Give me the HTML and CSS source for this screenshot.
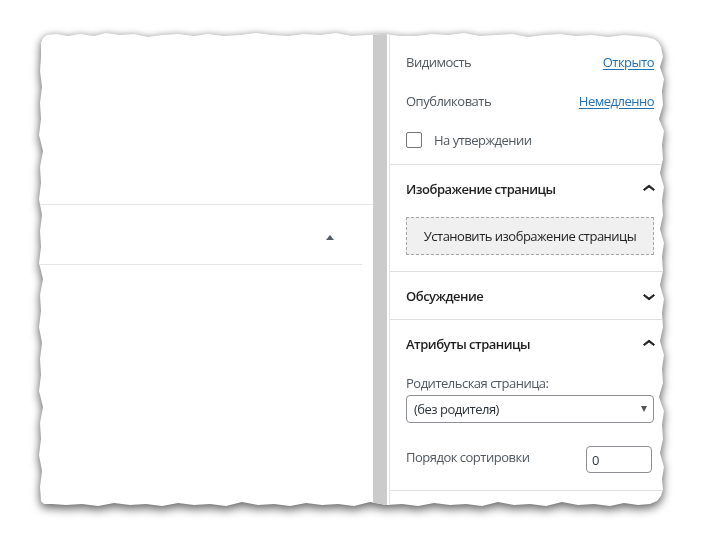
FILE: index.html
```html
<!DOCTYPE html>
<html lang="ru">
<head>
<meta charset="utf-8">
<title>Редактор страницы</title>
<link rel="stylesheet" href="styles.css">
</head>
<body>
<div class="stage">
  <div class="sheet">
    <div class="paper">
      <div class="editor">
        <div class="meta-box">
          <div class="meta-body">
            <span class="toggle-arrow"></span>
          </div>
        </div>
      </div>
      <div class="scrollbar"></div>
      <div class="gap"></div>
      <aside class="sidebar">
        <section class="panel status">
          <div class="row"><span class="label">Видимость</span><a class="link" href="#">Открыто</a></div>
          <div class="row"><span class="label">Опубликовать</span><a class="link" href="#">Немедленно</a></div>
          <div class="row check-row"><span class="checkbox"></span><span class="label">На утверждении</span></div>
        </section>
        <section class="panel">
          <div class="panel-header">
            <h2>Изображение страницы</h2>
            <svg class="chevron" viewBox="0 0 24 24" width="24" height="24"><path d="M6.5 12.4L12 8l5.5 4.4-.9 1.2L12 10l-4.6 3.6-1-1.2z"/></svg>
          </div>
          <div class="panel-body image-body">
            <div class="featured">Установить изображение страницы</div>
          </div>
        </section>
        <section class="panel">
          <div class="panel-header short">
            <h2>Обсуждение</h2>
            <svg class="chevron" viewBox="0 0 24 24" width="24" height="24"><path d="M17.5 11.6L12 16l-5.5-4.4.9-1.2L12 14l4.6-3.6 1 1.2z"/></svg>
          </div>
        </section>
        <section class="panel">
          <div class="panel-header">
            <h2>Атрибуты страницы</h2>
            <svg class="chevron" viewBox="0 0 24 24" width="24" height="24"><path d="M6.5 12.4L12 8l5.5 4.4-.9 1.2L12 10l-4.6 3.6-1-1.2z"/></svg>
          </div>
          <div class="panel-body attrs-body">
            <div class="field-label">Родительская страница:</div>
            <div class="select"><span>(без родителя)</span><span class="select-arrow"></span></div>
            <div class="order-row"><span class="label">Порядок сортировки</span><span class="num-input">0</span></div>
          </div>
        </section>
        <section class="panel rest"></section>
      </aside>
    </div>
  </div>
</div>
</body>
</html>
```

FILE: styles.css
```css
html, body {
  margin: 0;
  padding: 0;
  background: #ffffff;
}
body {
  font-family: "Open Sans", "Liberation Sans", sans-serif;
  font-size: 13px;
  letter-spacing: -0.5px;
  color: #1e1e1e;
}
.stage {
  padding: 31px 0 0 36px;
  width: 704px;
  height: 544px;
  box-sizing: border-box;
}
.sheet {
  width: 630px;
  height: 478px;
  filter: drop-shadow(0 4px 5px rgba(0, 0, 0, 0.5)) drop-shadow(0 0 3px rgba(0, 0, 0, 0.22));
}
.paper {
  width: 630px;
  height: 478px;
  background: #ffffff;
  overflow: hidden;
  display: grid;
  grid-template-columns: 337px 14px 2px 281px;
  clip-path: polygon(
    5px 12px, 7px 7px, 11px 4px, 20px 3px, 32px 5px, 44px 3px, 58px 5px, 70px 2px, 84px 4px, 98px 3px,
    112px 6px, 126px 4px, 142px 3px, 158px 5px, 172px 3px, 188px 5px, 204px 4px, 220px 2px, 236px 4px,
    252px 5px, 268px 3px, 284px 4px, 300px 2px, 316px 5px, 332px 4px, 348px 3px, 364px 5px, 380px 5px,
    396px 3px, 412px 4px, 428px 2px, 444px 5px, 460px 4px, 476px 3px, 492px 6px, 508px 4px, 524px 3px,
    540px 5px, 556px 4px, 572px 6px, 588px 4px, 600px 5px, 610px 6px, 618px 8px, 622px 11px,
    625px 16px, 627px 26px, 624px 36px, 628px 48px, 626px 60px, 627px 74px, 623px 88px, 628px 100px,
    626px 114px, 627px 128px, 624px 142px, 628px 156px, 626px 170px, 627px 184px, 624px 198px,
    628px 212px, 626px 226px, 627px 240px, 624px 254px, 628px 268px, 626px 282px, 627px 296px,
    624px 310px, 628px 324px, 626px 338px, 627px 352px, 623px 366px, 628px 380px, 626px 394px,
    627px 408px, 624px 422px, 628px 436px, 626px 448px, 627px 458px, 625px 465px, 621px 470px,
    614px 473px, 602px 474px, 588px 472px, 574px 475px, 558px 473px, 542px 474px, 526px 471px,
    510px 475px, 494px 473px, 478px 474px, 462px 471px, 446px 475px, 430px 473px, 414px 474px,
    398px 472px, 382px 475px, 366px 473px, 350px 474px, 334px 471px, 318px 475px, 302px 473px,
    286px 474px, 270px 472px, 254px 475px, 238px 473px, 222px 474px, 206px 471px, 190px 475px,
    174px 473px, 158px 474px, 142px 472px, 126px 475px, 110px 473px, 94px 474px, 78px 472px,
    62px 475px, 46px 473px, 30px 474px, 16px 473px, 8px 473px, 5px 470px,
    4px 456px, 6px 440px, 3px 424px, 5px 408px, 4px 392px, 7px 376px, 3px 360px, 5px 344px, 4px 328px,
    6px 312px, 3px 296px, 5px 280px, 4px 264px, 7px 248px, 3px 232px, 5px 216px, 4px 200px, 6px 184px,
    3px 168px, 5px 152px, 4px 136px, 7px 120px, 3px 104px, 5px 88px, 4px 72px, 6px 56px, 4px 40px,
    5px 26px
  );
}

/* left editor area */
.editor {
  padding-top: 173px;
}
.meta-box {
  border-top: 1px solid #e4e4e4;
}
.meta-body {
  height: 59px;
  margin-right: 11px;
  border-bottom: 1px solid #e4e4e4;
  display: flex;
  align-items: center;
  justify-content: flex-end;
  padding-right: 28px;
}
.toggle-arrow {
  width: 0;
  height: 0;
  border-left: 4px solid transparent;
  border-right: 4px solid transparent;
  border-bottom: 5px solid #555d66;
  margin-top: 6px;
}
.scrollbar {
  background: #cbcbcb;
}
.gap {
  background: #ffffff;
}

/* sidebar */
.sidebar {
  border-left: 1px solid #e4e4e4;
  width: 280px;
}
.panel {
  padding: 0 16px;
  border-bottom: 1px solid #e0e0e0;
}
.status {
  padding-top: 11px;
  padding-bottom: 5px;
}
.row {
  height: 39px;
  display: flex;
  align-items: center;
  justify-content: space-between;
}
.check-row {
  justify-content: flex-start;
  gap: 12px;
}
.label {
  color: #50575e;
}
.link {
  color: #2271b1;
  text-decoration: underline;
  text-underline-offset: 2px;
}
.checkbox {
  width: 16px;
  height: 16px;
  box-sizing: border-box;
  border: 1.5px solid #757575;
  border-radius: 2px;
  background: #ffffff;
}
.panel-header {
  height: 48px;
  display: flex;
  align-items: center;
  justify-content: space-between;
}
.panel-header.short {
  height: 47px;
}
.panel-header h2 {
  margin: 0;
  font-size: 13px;
  font-weight: 600;
  color: #1e1e1e;
}
.chevron {
  fill: #1e1e1e;
  margin-right: -7px;
  stroke: #1e1e1e;
  stroke-width: 0.8;
}
.image-body {
  padding-top: 4px;
  padding-bottom: 16px;
}
.featured {
  height: 38px;
  box-sizing: border-box;
  border: 1px dashed #a7a7a7;
  background: #f0f0f0;
  display: flex;
  align-items: center;
  justify-content: center;
  color: #1e1e1e;
}
.attrs-body {
  padding-top: 6px;
  padding-bottom: 17px;
}
.field-label {
  color: #50575e;
  line-height: 18px;
}
.select {
  margin-top: 3px;
  height: 28px;
  box-sizing: border-box;
  border: 1px solid #8c8f94;
  border-radius: 4px;
  display: flex;
  align-items: center;
  justify-content: space-between;
  padding: 0 6px 0 7px;
  color: #2c3338;
}
.select-arrow {
  width: 0;
  height: 0;
  border-left: 3px solid transparent;
  border-right: 3px solid transparent;
  border-top: 6px solid #555555;
}
.order-row {
  margin-top: 23px;
  display: flex;
  align-items: center;
  justify-content: space-between;
}
.order-row .label {
  margin-top: -5px;
}
.num-input {
  width: 66px;
  height: 27px;
  box-sizing: border-box;
  border: 1px solid #8c8f94;
  border-radius: 4px;
  display: flex;
  align-items: center;
  padding-left: 5px;
  margin-right: 2px;
  color: #2c3338;
}
.rest {
  border-bottom: none;
  height: 40px;
}
```
